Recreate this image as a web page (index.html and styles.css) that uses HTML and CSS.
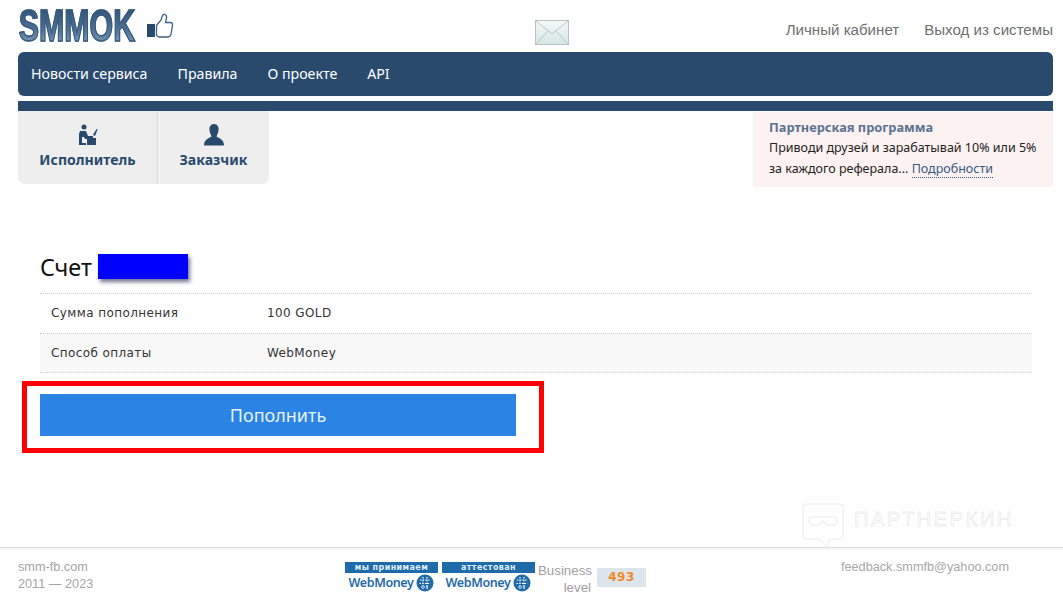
FILE: index.html
```html
<!DOCTYPE html>
<html lang="ru">
<head>
<meta charset="utf-8">
<title>Счет</title>
<link rel="stylesheet" href="styles.css">
</head>
<body>
<div class="page">
  <header class="top">
    <a class="logo">
      <span class="logo-text">SMMOK</span>
      <svg class="thumb" width="28" height="26" viewBox="0 0 28 26">
        <rect x="1" y="11" width="8" height="13" fill="#2a4a6d"/>
        <path d="M10.500 12.500 L15 7 L16.500 2.500 Q17 1 19 1.500 Q21 2.500 20.500 5 L19.500 9.500 L24.500 9.500 Q27 10 26.500 12.500 L25 21 Q24.500 24 21.500 24 L13 24 L10.500 22.500 Z" fill="#fff" stroke="#3f6183" stroke-width="1.300"/>
      </svg>
    </a>
    <svg class="mail" width="34" height="25" viewBox="0 0 34 25">
      <defs><linearGradient id="mg" x1="0" y1="0" x2="0" y2="1"><stop offset="0" stop-color="#f4f8f7"/><stop offset="1" stop-color="#d6e6e3"/></linearGradient></defs>
      <rect x=".5" y=".5" width="33" height="24" fill="url(#mg)" stroke="#b5c4c2"/>
      <path d="M1 1 L17 14 L33 1 M1 24 L13 11 M33 24 L21 11" fill="none" stroke="#b5c9c6"/>
    </svg>
    <nav class="user-links">
      <a>Личный кабинет</a>
      <a>Выход из системы</a>
    </nav>
  </header>

  <nav class="menu">
    <a>Новости сервиса</a>
    <a>Правила</a>
    <a>О проекте</a>
    <a>API</a>
  </nav>
  <div class="strip"></div>

  <section class="sub">
    <div class="tabs">
      <a class="tab tab-a">
        <svg width="20" height="22" viewBox="0 0 20 22">
          <circle cx="6" cy="3" r="2.500" fill="#2a4a6d"/>
          <path d="M2 7 H8 L10 12 H15 V15 H7 L6 13 H4 V19 H8 V21 H1 V10 Z" fill="#2a4a6d"/>
          <rect x="9" y="14" width="9" height="7" fill="#2a4a6d"/>
          <path d="M15 11 L18.500 5 L19.500 5.500 L17 12 Z" fill="#2a4a6d"/>
        </svg>
        <span>Исполнитель</span>
      </a>
      <a class="tab tab-b">
        <svg width="22" height="22" viewBox="0 0 22 22">
          <path d="M11 0 C14.500 0 16 3 15.500 6.500 C15 9.500 14 11 13.500 12.500 C15.500 14 21 15 21 21.500 H1 C1 15 6.500 14 8.500 12.500 C8 11 7 9.500 6.500 6.500 C6 3 7.500 0 11 0 Z" fill="#2a4a6d"/>
        </svg>
        <span>Заказчик</span>
      </a>
    </div>
    <aside class="promo">
      <h3>Партнерская программа</h3>
      <p>Приводи друзей и зарабатывай 10% или 5%</p>
      <p>за каждого реферала... <a>Подробности</a></p>
    </aside>
  </section>

  <main class="content">
    <h1 class="title">Счет <span class="mask"></span></h1>
    <div class="table">
      <div class="row"><span>Сумма пополнения</span><span>100 GOLD</span></div>
      <div class="row row-alt"><span>Способ оплаты</span><span>WebMoney</span></div>
    </div>
    <div class="highlight">
      <button class="pay">Пополнить</button>
    </div>
  </main>
</div>

<div class="watermark">
  <svg width="42" height="46" viewBox="0 0 42 46">
    <path d="M4 1 H38 Q41 1 41 4 V33 Q41 36 38 36 H28 L25 44 L17 36 H4 Q1 36 1 33 V4 Q1 1 4 1 Z M7 14 H35 V19 Q35 22 31 22 H26 Q22 22 22 18 H20 Q20 22 16 22 H11 Q7 22 7 19 Z" fill="none" stroke="#ececec"/>
  </svg>
  <span>ПАРТНЕРКИН</span>
</div>

<footer class="foot">
  <div class="copy">smm-fb.com<br>2011 — 2023</div>
  <div class="badges">
    <div class="wm">
      <div class="wm-bar">мы принимаем</div>
      <div class="wm-name">WebMoney
        <svg width="18" height="18" viewBox="0 0 18 18"><circle cx="9" cy="9" r="8.500" fill="#1f6aa8"/><path d="M4 6 H14 M3.500 9.500 H14.500 M5 13 H13 M7 3 V15 M11 3 V15" stroke="#fff" stroke-width="1.200" stroke-dasharray="1.500 1.200"/></svg>
      </div>
    </div>
    <div class="wm">
      <div class="wm-bar">аттестован</div>
      <div class="wm-name">WebMoney
        <svg width="18" height="18" viewBox="0 0 18 18"><circle cx="9" cy="9" r="8.500" fill="#1f6aa8"/><path d="M4 6 H14 M3.500 9.500 H14.500 M5 13 H13 M7 3 V15 M11 3 V15" stroke="#fff" stroke-width="1.200" stroke-dasharray="1.500 1.200"/></svg>
      </div>
    </div>
    <div class="level-label">Business<br>level</div>
    <div class="level">493</div>
  </div>
  <div class="mailto">feedback.smmfb@yahoo.com</div>
</footer>
</body>
</html>
```
FILE: styles.css
```css
* { box-sizing: border-box; }
html, body { margin: 0; padding: 0; }
body {
  height: 599px;
  overflow: hidden;
  background: #fff;
  font-family: "Liberation Sans", Arial, sans-serif;
  color: #222;
  position: relative;
}
.page { padding: 0 10px 0 18px; height: 547px; }

.top { display: grid; grid-template-columns: 517px 34px 1fr; height: 52px; }
.logo { display: flex; align-items: flex-start; padding-top: 8px; }
.logo-text {
  display: block;
  flex: none;
  width: 172px;
  height: 36px;
  margin-right: -54px;
  padding-left: 1px;
  line-height: 36px;
  font-size: 44px;
  font-weight: 700;
  transform: scaleX(.69);
  transform-origin: 0 50%;
  white-space: nowrap;
  background: linear-gradient(#2f5278, #4f7194 60%, #7f9bb6);
  -webkit-background-clip: text;
  background-clip: text;
  color: transparent;
  -webkit-text-stroke: 1.500px #3a5b7e;
}
.thumb { margin: 5px 0 0 10px; }
.mail { margin-top: 20px; }
.user-links {
  display: flex;
  justify-content: flex-end;
  gap: 25px;
  padding-top: 21px;
  font-size: 15.100px;
  line-height: 18px;
  color: #6f6f6f;
}

.menu {
  display: flex;
  gap: 30px;
  align-items: center;
  height: 44px;
  padding: 0 0 2px 13px;
  background: #2a4a6d;
  border-radius: 6px;
  color: #fff;
  font-family: "Noto Sans", sans-serif;
  font-size: 14.200px;
}
.strip { height: 10px; margin-top: 5px; background: #2a4a6d; }

.sub { display: flex; justify-content: space-between; align-items: flex-start; }
.tabs {
  display: flex;
  height: 73px;
  background: #eee;
  border-radius: 0 0 7px 7px;
}
.tab {
  display: flex;
  flex-direction: column;
  align-items: center;
  padding-top: 13px;
  font-family: "Noto Sans", sans-serif;
  font-size: 14.100px;
  font-weight: 700;
  line-height: 19px;
  color: #2a4a6d;
}
.tab svg { margin-bottom: 4px; }
.tab-a { width: 140px; border-right: 1px solid #dcdcdc; }
.tab-b { width: 110px; margin-left: 1px; padding-right: 2px; border-left: 1px solid #f6f6f6; }

.promo {
  width: 300px;
  height: 75px;
  margin-top: 1px;
  padding: 6px 0 0 16px;
  background: #fdf2f2;
  font-family: "Noto Sans", sans-serif;
  font-size: 12.500px;
  line-height: 21px;
  color: #222;
}
.promo h3 { margin: 0; font-size: 12.800px; font-weight: 700; color: #5b7390; line-height: 19px; }
.promo p { margin: 0; }
.promo a { color: #36597f; border-bottom: 1px dotted #36597f; }

.content { padding: 67px 21px 0 22px; }
.title {
  display: flex;
  align-items: center;
  gap: 6px;
  margin: 0 0 14px;
  height: 25px;
  font-size: 23.400px;
  font-weight: 400;
  color: #111;
  font-family: "Noto Sans", sans-serif;
}
.mask { width: 90px; height: 25px; background: #0000ff; box-shadow: 2px 3px 4px rgba(0, 0, 60, .55); }

.table {
  border-top: 1px dotted #d0d0d0;
  font-family: "DejaVu Sans", sans-serif;
  font-size: 12px;
  letter-spacing: .4px;
  color: #333;
}
.row {
  display: grid;
  grid-template-columns: 216px 1fr;
  align-items: center;
  height: 39.500px;
  padding-left: 11px;
  border-bottom: 1px dotted #d0d0d0;
}
.row-alt { background: #f8f8f8; }

.highlight {
  width: 522px;
  height: 72px;
  margin: 8px 0 0 -18px;
  padding: 8px 0 0 13px;
  border: 5px solid #ff0000;
}
.pay {
  display: block;
  width: 476px;
  height: 42px;
  border: 0;
  background: #2b83e3;
  color: #e6f3ff;
  font-family: "Noto Sans", sans-serif;
  font-size: 18px;
}

.watermark {
  position: absolute;
  left: 802px;
  top: 503px;
  display: flex;
  align-items: center;
  gap: 10px;
  height: 46px;
  padding-bottom: 14px;
  font-family: "Liberation Sans", sans-serif;
  font-size: 20px;
  letter-spacing: 2.600px;
  color: transparent;
  -webkit-text-stroke: .5px #e2e2e2;
}
.watermark svg { margin-bottom: -14px; }

.foot {
  display: grid;
  grid-template-columns: 327px 1fr auto;
  height: 52px;
  padding: 11px 54px 0 18px;
  border-top: 1px solid #ddd;
  box-shadow: inset 0 3px 3px -2px #eee;
  font-size: 12.700px;
  line-height: 16.500px;
  color: #a5a5a5;
}
.badges { display: flex; align-items: flex-start; }
.wm { width: 97px; padding-top: 3px; }
.wm-bar {
  width: 93px;
  height: 11px;
  background: #1f6aa8;
  color: #dfeef9;
  font-family: "DejaVu Sans", sans-serif;
  font-size: 8px;
  font-weight: 700;
  line-height: 11px;
  letter-spacing: .4px;
  text-align: center;
}
.wm-name {
  display: flex;
  align-items: center;
  justify-content: center;
  gap: 3px;
  width: 93px;
  height: 20px;
  font-family: "Noto Sans", sans-serif;
  font-size: 12.500px;
  font-weight: 600;
  letter-spacing: -.4px;
  color: #1f6aa8;
}
.level-label {
  width: 53px;
  margin: 3px 5px 0 -1px;
  font-size: 13.300px;
  line-height: 17px;
  text-align: right;
  color: #a0a0a0;
}
.level {
  width: 49px;
  height: 19px;
  margin: 9px 0 0 1px;
  background: #dde5ec;
  color: #ef8a26;
  font-family: "DejaVu Sans", sans-serif;
  font-size: 12px;
  font-weight: 700;
  line-height: 19px;
  letter-spacing: .5px;
  text-align: center;
}
.mailto { color: #a8a8a8; }
```
